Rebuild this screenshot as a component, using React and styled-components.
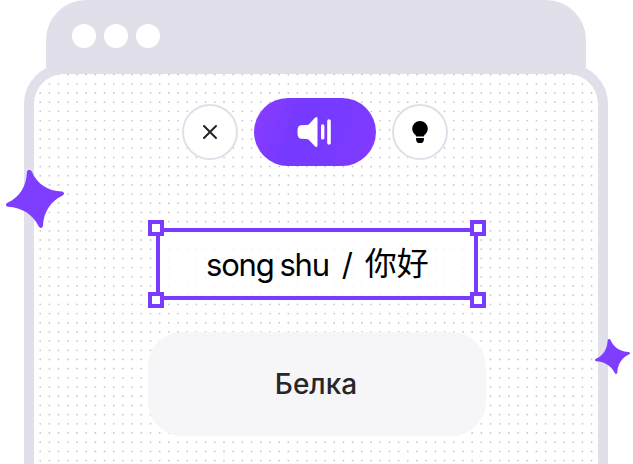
import React from "react";
import styled, { createGlobalStyle } from "styled-components";

const VIOLET = "#7f3dff";
const OUTLINE = "#783bff";
const LAVENDER = "#e0dfea";

const GlobalStyle = createGlobalStyle`
  * { box-sizing: border-box; }
  body { margin: 0; background: #fff; overflow: hidden; }
`;

const Scene = styled.main`
  position: relative;
  width: 633px;
  height: 464px;
  overflow: hidden;
  background: #fff;
  font-family: Inter, "Noto Sans CJK SC", sans-serif;
`;

const TitleBar = styled.header`
  width: 540px;
  height: 74px;
  margin-left: 46px;
  padding: 24px 26px;
  display: flex;
  gap: 8px;
  border-radius: 40px 40px 0 0;
  background: ${LAVENDER};
`;

const WindowDot = styled.span`
  width: 24px;
  height: 24px;
  border-radius: 50%;
  background: #fff;
`;

const WindowBody = styled.section`
  position: relative;
  width: 584px;
  height: 440px;
  margin: -10px 0 0 24px;
  padding: 24px 0 0;
  display: flex;
  flex-direction: column;
  border: 10px solid ${LAVENDER};
  border-radius: 40px;
  background: #fff;
`;

const DotLayer = styled.svg`
  position: absolute;
  inset: 0;
  width: 564px;
  height: 420px;
  border-radius: 30px;
`;

const Controls = styled.div`
  position: relative;
  display: flex;
  align-items: center;
  gap: 16px;
  margin-left: 148px;
`;

const RoundButton = styled.button`
  width: 56px;
  height: 56px;
  padding: 0;
  display: grid;
  place-items: center;
  border: 2px solid ${LAVENDER};
  border-radius: 50%;
  background: #fff;
`;

const SoundButton = styled.button`
  width: 122px;
  height: 68px;
  padding: 0;
  display: grid;
  place-items: center;
  border: 0;
  border-radius: 34px;
  background: linear-gradient(110deg, #8b3dff 0%, #7639ff 35%, #783aff 65%, #843aff 100%);
`;

const Icon = styled.svg`
  display: block;
  overflow: visible;
`;

const Selection = styled.div`
  position: relative;
  width: 322px;
  height: 72px;
  margin: 62px 0 0 122px;
  padding-bottom: 2px;
  display: flex;
  align-items: center;
  border: 4px solid ${OUTLINE};
  background: rgba(255, 255, 255, 0.8);
`;

const Handle = styled.span`
  position: absolute;
  width: 16px;
  height: 16px;
  border: 4px solid ${OUTLINE};
  background: #fff;
  ${({ $v }) => $v}: -12px;
  ${({ $h }) => $h}: -12px;
`;

const Phrase = styled.div`
  display: flex;
  align-items: baseline;
  margin-left: 46px;
  font-size: 31px;
  line-height: 40px;
  letter-spacing: -1.2px;
  word-spacing: -1.6px;
  color: #000;
  white-space: pre;
`;

const Slash = styled.span`
  margin: 0 13px 0 13px;
`;

const Hanzi = styled.span`
  font-family: "Noto Sans CJK SC", sans-serif;
  font-size: 32px;
  letter-spacing: 0;
  transform: translateY(-1px);
`;

const Answer = styled.div`
  position: relative;
  width: 338px;
  height: 104px;
  margin: 32px 0 0 114px;
  padding-right: 2px;
  display: flex;
  align-items: center;
  justify-content: center;
  border-radius: 34px;
  background: #f6f6f8;
  color: #26262b;
  font-size: 28px;
  font-weight: 500;
`;

const Spark = styled.svg`
  position: absolute;
  left: ${({ $x }) => $x}px;
  top: ${({ $y }) => $y}px;
  width: ${({ $size }) => $size}px;
  height: ${({ $size }) => $size}px;
`;

const DOT_STEP = 9.19;
const dotRows = Array.from({ length: 46 }, (_, i) => 0.6 + i * DOT_STEP);

const DotGrid = () => (
  <DotLayer viewBox="0 0 564 420">
    {dotRows.map((y) => (
      <line
        key={y}
        x1="6.2"
        x2="564"
        y1={y}
        y2={y}
        stroke="#c8c8ca"
        strokeWidth="1.8"
        strokeLinecap="round"
        strokeDasharray={`0.01 ${DOT_STEP - 0.01}`}
      />
    ))}
  </DotLayer>
);

const Sparkle = (props) => (
  <Spark viewBox="0 0 58 58" {...props}>
    <path
      d="M21 1.5C22 -.5 24.8-.4 25.8 1.6C31 14 42 21.2 55.8 21.5C58.3 21.7 58.8 24.3 56.6 25.4C45 31 37.5 41.5 37 55.5C36.8 58.2 34 58.7 32.8 56.5C27 44.5 16 37.5 2 36.8C-.5 36.5-.8 33.8 1.4 32.8C14 27 20.5 16 21 1.5Z"
      fill={VIOLET}
    />
  </Spark>
);

export default function App() {
  return (
    <>
      <GlobalStyle />
      <Scene>
        <TitleBar>
          <WindowDot />
          <WindowDot />
          <WindowDot />
        </TitleBar>
        <WindowBody>
          <DotGrid />
          <Controls>
            <RoundButton aria-label="Close">
              <Icon width="14" height="14" viewBox="0 0 14 14" fill="none" stroke="#222225" strokeWidth="2" strokeLinecap="round">
                <path d="M1 1 13 13M13 1 1 13" />
              </Icon>
            </RoundButton>
            <SoundButton aria-label="Play sound">
              <Icon width="36" height="32" viewBox="0 0 36 32" fill="#fff">
                <path d="M3.5 9.3 10 8.9Q11.3 8.7 12.2 7.9L18.2 1.6Q20.5 .2 20.5 2.7V29.3Q20.5 31.8 18.2 30.4L12.2 24.2Q11.3 23.3 10 23.1L4 22.7Q1.2 22.4 .7 19.6Q.3 16 .7 12.4Q1.1 9.7 3.5 9.3Z" />
                <rect x="24" y="8.2" width="3.4" height="15.4" rx="1.7" />
                <rect x="30.2" y="3.2" width="3.6" height="25.6" rx="1.8" />
              </Icon>
            </SoundButton>
            <RoundButton aria-label="Hint">
              <Icon width="16" height="22" viewBox="0 0 16 22" fill="#000">
                <path d="M8 0A7.8 7.8 0 0 0 .2 7.8C.2 10.9 2 12.8 3.5 14.1Q4.1 14.7 4.1 15.5H11.9Q11.9 14.7 12.5 14.1C14 12.8 15.8 10.9 15.8 7.8A7.8 7.8 0 0 0 8 0Z" />
                <path d="M4.1 17H11.9V18.2A3.9 3.9 0 0 1 4.1 18.2Z" />
              </Icon>
            </RoundButton>
          </Controls>
          <Selection>
            <Phrase>
              <span>song shu</span>
              <Slash>/</Slash>
              <Hanzi>你好</Hanzi>
            </Phrase>
            <Handle $v="top" $h="left" />
            <Handle $v="top" $h="right" />
            <Handle $v="bottom" $h="left" />
            <Handle $v="bottom" $h="right" />
          </Selection>
          <Answer>Белка</Answer>
        </WindowBody>
        <Sparkle $x={6} $y={170} $size={58} />
        <Sparkle $x={595} $y={339} $size={35} />
      </Scene>
    </>
  );
}
